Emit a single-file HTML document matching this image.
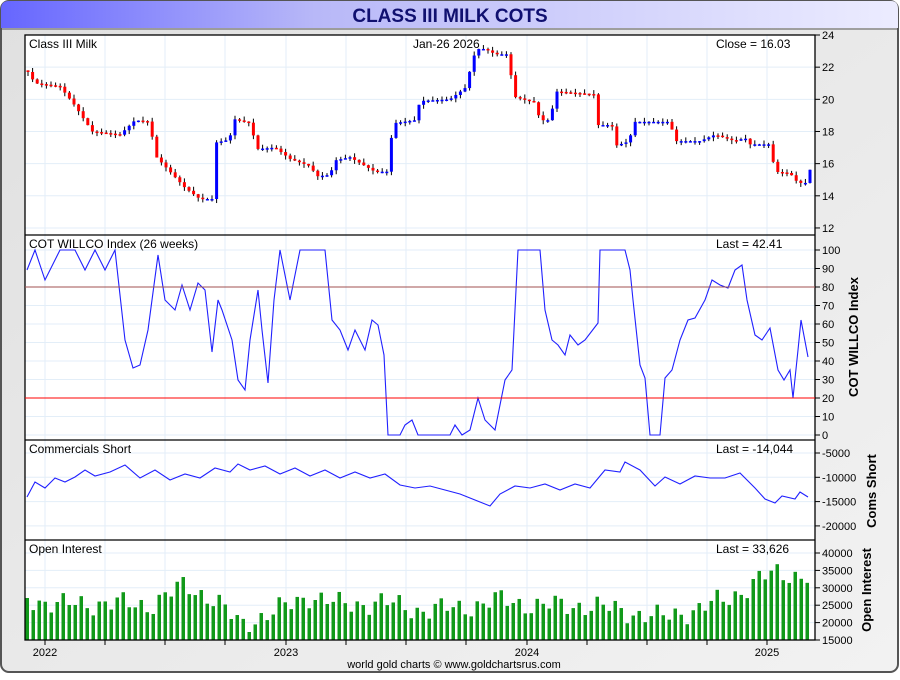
<!DOCTYPE html>
<html><head><meta charset="utf-8"><style>
body{margin:0;width:900px;height:675px;overflow:hidden;background:#fff;font-family:"Liberation Sans",sans-serif}
</style></head><body>
<svg id="s" width="900" height="675" xmlns="http://www.w3.org/2000/svg" font-family="Liberation Sans, sans-serif">
<defs>
<linearGradient id="tb" x1="0" x2="1"><stop offset="0" stop-color="#6666ff"/><stop offset="0.35" stop-color="#b8b8f8"/><stop offset="1" stop-color="#ececff"/></linearGradient>
<linearGradient id="bg" x1="0" x2="1" y1="0" y2="1"><stop offset="0" stop-color="#e0e0e0"/><stop offset="1" stop-color="#f2f2f2"/></linearGradient>
</defs>
<rect x="1" y="1" width="897" height="671" rx="8" fill="url(#bg)" stroke="#555" stroke-width="2"/>
<path d="M1,28 L1,9 Q1,1 9,1 L891,1 Q898,1 898,9 L898,28 Z" fill="url(#tb)"/>
<line x1="1" y1="29" x2="898" y2="29" stroke="#555"/>
<text x="450" y="22" text-anchor="middle" font-size="19" font-weight="bold" fill="#101070">CLASS III MILK COTS</text>
<rect x="25" y="35" width="790" height="605" fill="#fff"/>
<g id="grid" stroke="#e3eef8" stroke-width="1"></g>
<g id="data"></g>
<g stroke="#000" stroke-width="1.3" fill="none">
<rect x="25" y="35" width="790" height="605"/>
<line x1="25" y1="235" x2="815" y2="235"/><line x1="25" y1="440" x2="815" y2="440"/><line x1="25" y1="540" x2="815" y2="540"/>
</g>
<line x1="25" y1="287" x2="815" y2="287" stroke="#a05050" stroke-width="1"/>
<line x1="25" y1="398" x2="815" y2="398" stroke="#ff0000" stroke-width="1"/>
<g font-size="12" fill="#000">
<text x="29" y="48">Class III Milk</text><text x="413" y="48">Jan-26  2026</text><text x="716" y="48">Close = 16.03</text>
<text x="29" y="248">COT WILLCO Index (26 weeks)</text><text x="716" y="248">Last = 42.41</text>
<text x="29" y="453">Commercials Short</text><text x="716" y="453">Last = -14,044</text>
<text x="29" y="553">Open Interest</text><text x="716" y="553">Last = 33,626</text>
</g>
<g font-size="11" fill="#000" id="ax"></g>
<g font-size="13" font-weight="bold" fill="#000">
<text transform="translate(858,337) rotate(-90)" text-anchor="middle">COT WILLCO Index</text>
<text transform="translate(876,491) rotate(-90)" text-anchor="middle">Coms Short</text>
<text transform="translate(871,590) rotate(-90)" text-anchor="middle">Open Interest</text>
</g>
<g font-size="11" fill="#000" text-anchor="middle">
<text x="45" y="656">2022</text><text x="286" y="656">2023</text><text x="527" y="656">2024</text><text x="767" y="656">2025</text>
<text x="454" y="668" font-size="11">world gold charts © www.goldchartsrus.com</text>
</g>
</svg>
<script>
var NS="http://www.w3.org/2000/svg",D=document.getElementById('data'),G=document.getElementById('grid'),A=document.getElementById('ax');
function el(p,tag,at,txt){var e=document.createElementNS(NS,tag);for(var k in at)e.setAttribute(k,at[k]);if(txt!=null)e.textContent=txt;p.appendChild(e);return e;}
var vx=[45,105,165,225,286,346,406,466,527,587,647,707,767];
vx.forEach(function(x){el(G,'line',{x1:x,y1:35,x2:x,y2:640});el(A,'line',{x1:x,y1:640,x2:x,y2:645,stroke:'#000'});});
function hl(y,lab,x){el(G,'line',{x1:25,y1:y,x2:815,y2:y});el(A,'line',{x1:815,y1:y,x2:820,y2:y,stroke:'#000'});el(A,'text',{x:x||822,y:y+4},lab);}
for(var v=12;v<=24;v+=2)hl(35+(24-v)*16.08,v);
for(var v=0;v<=100;v+=10)hl(435-1.85*v,v);
for(var v=5000;v<=20000;v+=5000)hl(453+(v-5000)/5000*24.3,'-'+v);
for(var v=15000;v<=40000;v+=5000)hl(640-(v-15000)/5000*17.4,v);
function interp(pts,x){for(var i=1;i<pts.length;i++){if(x<=pts[i][0]){var a=pts[i-1],b=pts[i];return a[1]+(b[1]-a[1])*(x-a[0])/(b[0]-a[0]||1);}}return pts[pts.length-1][1];}
var P=[[27,21.8],[35,21],[60,20.8],[75,19.6],[92,18],[120,17.8],[135,18.7],[150,18.6],[155,16.5],[170,15.5],[185,14.5],[200,13.8],[212,13.8],[215,17.3],[230,17.5],[232,18.8],[252,18.5],[255,16.9],[275,17],[290,16.3],[312,15.8],[315,15.2],[330,15.3],[335,16.2],[350,16.4],[375,15.5],[390,15.5],[392,18.5],[415,18.7],[420,19.9],[450,20],[465,20.7],[475,22.9],[480,23.2],[490,23],[495,22.8],[510,22.8],[512,20.2],[535,19.8],[540,18.7],[552,18.7],[553,20.5],[595,20.3],[598,18.4],[612,18.4],[615,17.1],[630,17.4],[632,18.6],[670,18.6],[675,17.4],[700,17.4],[715,17.8],[735,17.4],[745,17.6],[750,17.2],[770,17.2],[775,15.5],[790,15.4],[798,14.8],[808,14.8],[811,16.03]];
function py(v){return 35+(24-v)*16.08;}
var prev=21.8,i=0;
for(var x=28;x<=811;x+=4.6,i++){var c=interp(P,x);var o=prev;prev=c;var hi=Math.max(o,c)+0.25*Math.abs(Math.sin(i*1.7)),lo=Math.min(o,c)-0.25*Math.abs(Math.cos(i*2.3));
var col=c>=o?'#0000ff':'#ff0000';el(D,'line',{x1:x,y1:py(hi),x2:x,y2:py(lo),stroke:'#000','stroke-width':1});
var t=py(Math.max(o,c)),b=py(Math.min(o,c));el(D,'rect',{x:x-1.5,y:t,width:3,height:Math.max(1.5,b-t),fill:col});}
var C=[[27,270],[35,250],[45,280],[60,250],[75,250],[85,270],[95,250],[105,270],[115,250],[125,340],[133,368],[140,365],[148,330],[158,255],[165,300],[175,310],[182,285],[190,310],[198,283],[205,290],[212,352],[218,300],[222,310],[232,340],[238,380],[245,390],[250,340],[258,290],[262,330],[268,383],[274,300],[280,250],[290,300],[300,250],[325,250],[332,320],[340,330],[348,350],[355,330],[365,350],[372,320],[378,325],[384,355],[388,435],[400,435],[405,425],[412,420],[418,435],[428,435],[450,435],[455,425],[462,435],[470,430],[478,398],[485,420],[495,430],[505,380],[512,370],[518,250],[540,250],[545,310],[552,340],[558,345],[565,355],[570,335],[578,345],[585,340],[598,323],[600,250],[625,250],[630,270],[633,300],[640,365],[645,378],[650,435],[660,435],[665,378],[672,370],[680,340],[688,320],[695,318],[705,300],[712,280],[720,285],[728,288],[735,270],[742,265],[747,300],[755,335],[762,340],[770,328],[778,370],[784,380],[790,370],[793,398],[798,350],[801,320],[808,357]];
el(D,'polyline',{points:C.join(' '),fill:'none',stroke:'#2020ff','stroke-width':1.1});
var M=[[27,497],[35,482],[45,488],[55,478],[65,482],[75,477],[85,470],[95,476],[110,472],[125,465],[140,478],[155,470],[170,480],[185,474],[200,478],[215,468],[230,472],[238,464],[250,470],[265,466],[280,474],[295,468],[310,476],[325,470],[340,478],[355,472],[370,478],[385,474],[400,485],[415,488],[430,486],[445,490],[460,494],[475,500],[490,506],[500,494],[515,486],[530,488],[545,484],[560,490],[575,484],[590,488],[605,470],[620,472],[625,462],[640,470],[655,486],[665,477],[680,484],[695,476],[710,478],[725,478],[740,473],[755,488],[765,499],[775,503],[782,496],[795,499],[800,492],[808,497]];
el(D,'polyline',{points:M.join(' '),fill:'none',stroke:'#2020ff','stroke-width':1.1});
var O=[[27,598],[60,605],[100,603],[150,605],[185,585],[215,600],[240,625],[290,605],[310,595],[340,605],[380,602],[420,610],[460,608],[500,600],[540,606],[580,605],[620,610],[660,618],[700,608],[730,598],[760,578],[775,574],[811,575]];
i=0;for(var x=27;x<=810;x+=6,i++){var y=interp(O,x)+8*Math.sin(i*1.9)+5*Math.sin(i*0.7);y=Math.min(y,632);el(D,'rect',{x:x-1.5,y:y,width:3.5,height:640-y,fill:'#11991a'});}
</script>
</body></html>
